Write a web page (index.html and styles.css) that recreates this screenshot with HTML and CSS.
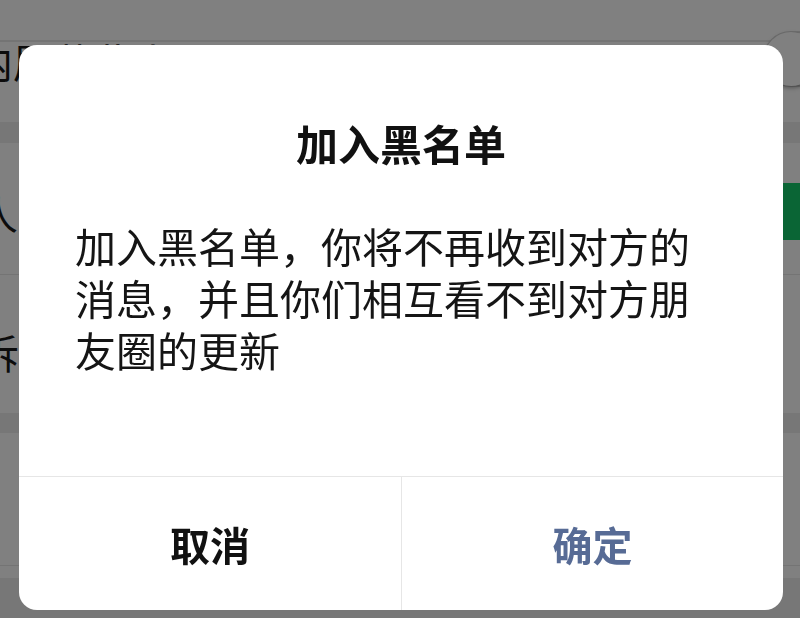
FILE: index.html
```html
<!DOCTYPE html>
<html lang="zh-CN">
<head>
<meta charset="utf-8">
<title>加入黑名单</title>
<link rel="stylesheet" href="styles.css">
</head>
<body>
<div class="page">
  <div class="row row-top">
    <span class="row-text row-text-top">内屏蔽此人</span>
    <span class="switch-off"><span class="knob"></span></span>
  </div>
  <div class="gap gap-a"></div>
  <div class="row row-two">
    <span class="row-text row-text-two">人</span>
    <span class="switch-on"></span>
  </div>
  <div class="row row-three">
    <span class="row-text row-text-three">诉</span>
  </div>
  <div class="gap gap-b"></div>
  <div class="row row-four"></div>
  <div class="row row-five"></div>
  <div class="gap gap-c"></div>
</div>

<div class="mask">
  <div class="dialog">
    <div class="dialog-main">
      <h2 class="dialog-title">加入黑名单</h2>
      <p class="dialog-text">加入黑名单，你将不再收到对方的消息，并且你们相互看不到对方朋友圈的更新</p>
    </div>
    <div class="dialog-footer">
      <div class="btn btn-cancel">取消</div>
      <div class="btn btn-ok">确定</div>
    </div>
  </div>
</div>
</body>
</html>
```

FILE: styles.css
```css
html, body {
  margin: 0;
  padding: 0;
  width: 800px;
  height: 618px;
  overflow: hidden;
  font-family: "Noto Sans CJK SC", "Noto Sans", sans-serif;
}

.page {
  width: 800px;
  height: 618px;
  overflow: hidden;
  background: #7a7a7a;
  display: flex;
  flex-direction: column;
}

.row {
  background: #808080;
  display: flex;
  flex-shrink: 0;
}

.row-top {
  height: 122px;
  background: linear-gradient(to bottom, #808080 0, #808080 40px, #747474 40px, #747474 42px, #808080 42px);
  align-items: flex-start;
}

.gap {
  background: #777777;
  flex-shrink: 0;
}

.gap-a { height: 21px; }

.row-two {
  height: 131px;
  border-bottom: 1px solid #747474;
  align-items: center;
}

.row-three {
  height: 138px;
  align-items: center;
}

.gap-b { height: 20px; }

.row-four {
  height: 132px;
  border-bottom: 1px solid #747474;
}

.row-five {
  height: 12px;
}

.gap-c { flex: 1; }

.row-text {
  font-size: 40px;
  line-height: 40px;
  color: #0c0c0c;
  white-space: nowrap;
}

.row-text-top {
  margin-left: -27px;
  margin-top: 41px;
}

.row-text-two {
  margin-left: -22px;
  margin-top: 8px;
}

.row-text-three {
  margin-left: -21px;
  margin-top: 16px;
}

.switch-off {
  margin-left: auto;
  margin-right: -83px;
  margin-top: 31px;
  width: 120px;
  height: 56px;
  border-radius: 28px;
  border: 2px solid #6e6e6e;
  box-sizing: border-box;
  display: flex;
  align-items: center;
}

.knob {
  width: 54px;
  height: 54px;
  border-radius: 50%;
  background: #808080;
  box-shadow: 0 2px 4px rgba(0, 0, 0, 0.35);
  margin-left: -1px;
}

.switch-on {
  margin-left: auto;
  margin-right: -30px;
  margin-top: 6px;
  width: 110px;
  height: 57px;
  border-radius: 29px;
  background: #0a6535;
}

.mask {
  position: fixed;
  left: 0;
  top: 0;
  width: 800px;
  height: 618px;
}

.dialog {
  position: absolute;
  left: 19px;
  top: 45px;
  width: 764px;
  height: 565px;
  background: #ffffff;
  border-radius: 18px;
  display: flex;
  flex-direction: column;
  overflow: hidden;
}

.dialog-main {
  flex: 1;
  padding: 0 56px;
}

.dialog-title {
  margin: 68px 0 0;
  font-size: 42px;
  line-height: 60px;
  font-weight: 700;
  text-align: center;
  color: #111111;
}

.dialog-text {
  margin: 46px 0 0;
  font-size: 41px;
  line-height: 52px;
  font-weight: 400;
  color: #151515;
}

.dialog-footer {
  height: 133px;
  border-top: 1px solid #e6e6e6;
  display: grid;
  grid-template-columns: 382px 1fr;
  flex-shrink: 0;
}

.btn {
  display: flex;
  align-items: center;
  justify-content: center;
  font-size: 40px;
  font-weight: 700;
}

.btn-cancel {
  color: #111111;
}

.btn-ok {
  color: #576b95;
  border-left: 1px solid #e6e6e6;
}
```
